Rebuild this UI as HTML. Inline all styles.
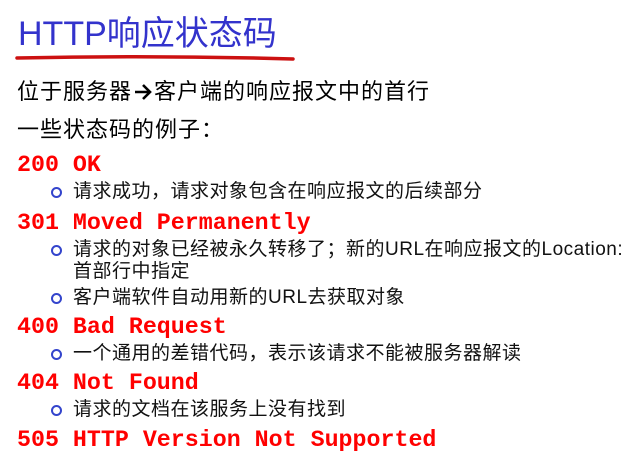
<!DOCTYPE html>
<html><head><meta charset="utf-8"><style>
body{margin:0;width:626px;height:458px;background:#fff;position:relative;overflow:hidden;font-family:"Liberation Sans","Noto Sans CJK SC",sans-serif}
.a{position:absolute;white-space:nowrap;line-height:1}
.t{left:18px;top:17px;font-size:34px;color:#3333cc}
.b{left:17px;font-size:22px;color:#000;letter-spacing:1px}
.c{left:17px;font-family:"Liberation Mono",monospace;font-weight:bold;font-size:23.3px;color:#f00}
.s{left:73px;font-size:19px;color:#111;letter-spacing:0.5px}
.d{position:absolute;left:51px;width:7px;height:7px;border:2px solid #3344cc;border-radius:50%}
</style></head><body>
<div class="a t">HTTP响应状态码</div>
<svg class="a" style="left:14px;top:53px" width="282" height="10"><path d="M3 5 Q140 2 279 6" stroke="#cc1111" stroke-width="3.5" fill="none" stroke-linecap="round"/></svg>
<div class="a b" style="top:81px">位于服务器<svg width="20" height="18" style="vertical-align:-2px;margin:0 1px"><path d="M2 9 H17 M10 2 L17 9 L10 16" stroke="#000" stroke-width="2.6" fill="none"/></svg>客户端的响应报文中的首行</div>
<div class="a b" style="top:119px">一些状态码的例子：</div>
<div class="a c" style="top:154px">200 OK</div>
<div class="d" style="top:187px"></div><div class="a s" style="top:182px">请求成功，请求对象包含在响应报文的后续部分</div>
<div class="a c" style="top:212px">301 Moved Permanently</div>
<div class="d" style="top:245px"></div><div class="a s" style="top:240px">请求的对象已经被永久转移了；新的URL在响应报文的Location:</div>
<div class="a s" style="top:262px">首部行中指定</div>
<div class="d" style="top:293px"></div><div class="a s" style="top:288px">客户端软件自动用新的URL去获取对象</div>
<div class="a c" style="top:316px">400 Bad Request</div>
<div class="d" style="top:349px"></div><div class="a s" style="top:344px">一个通用的差错代码，表示该请求不能被服务器解读</div>
<div class="a c" style="top:372px">404 Not Found</div>
<div class="d" style="top:405px"></div><div class="a s" style="top:400px">请求的文档在该服务上没有找到</div>
<div class="a c" style="top:429px">505 HTTP Version Not Supported</div>
</body></html>
